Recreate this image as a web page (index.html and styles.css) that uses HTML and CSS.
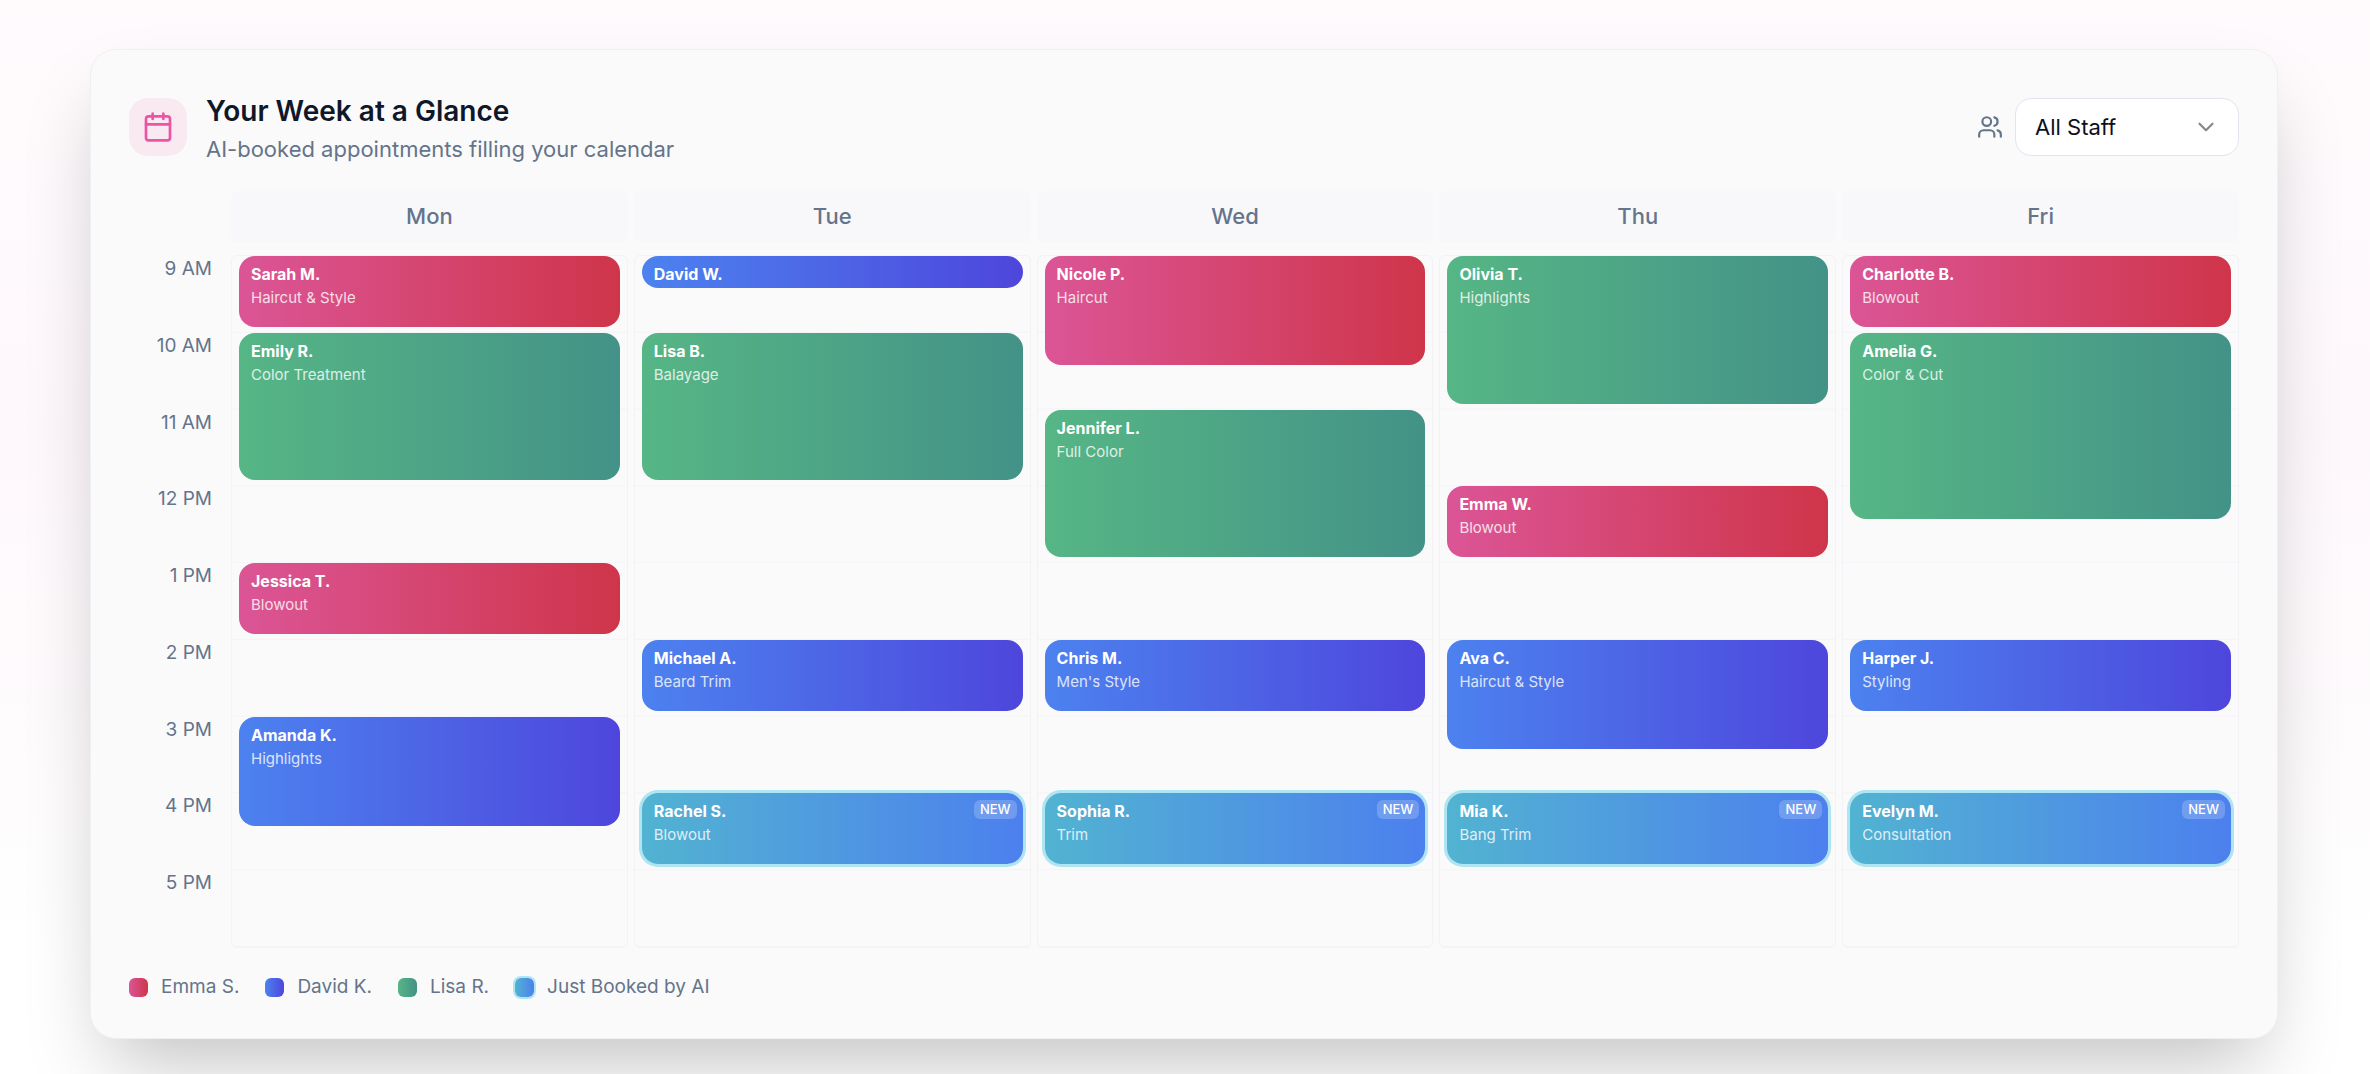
FILE: index.html
```html
<!DOCTYPE html>
<html lang="en">
<head>
    <meta charset="UTF-8">
    <meta name="viewport" content="width=device-width, initial-scale=1.0">
    <title>Your Week at a Glance</title>
    <link rel="stylesheet" href="styles.css">
</head>
<body>
    <main class="card">
        <header class="card-header">
            <div class="icon-box">
                <svg class="icon-calendar" viewBox="0 0 24 24" aria-hidden="true">
                    <path d="M8 2v4M16 2v4M3 10h18"/>
                    <rect x="3" y="4" width="18" height="18" rx="2"/>
                </svg>
            </div>
            <div class="heading">
                <h1>Your Week at a Glance</h1>
                <p>AI-booked appointments filling your calendar</p>
            </div>
            <div class="filter">
                <label for="staff" aria-label="Staff">
                    <svg class="icon-users" viewBox="0 0 24 24" aria-hidden="true">
                        <path d="M16 21v-2a4 4 0 0 0-4-4H6a4 4 0 0 0-4 4v2"/>
                        <circle cx="9" cy="7" r="4"/>
                        <path d="M22 21v-2a4 4 0 0 0-3-3.87M16 3.13a4 4 0 0 1 0 7.75"/>
                    </svg>
                </label>
                <div class="select-wrap">
                    <select id="staff">
                        <option>All Staff</option>
                        <option>Emma S.</option>
                        <option>David K.</option>
                        <option>Lisa R.</option>
                    </select>
                    <svg class="icon-chevron" viewBox="0 0 24 24" aria-hidden="true">
                        <path d="m6 9 6 6 6-6"/>
                    </svg>
                </div>
            </div>
        </header>

        <!-- --start and --len are counted in half hours from 9 AM -->
        <section class="calendar">
            <div></div>
            <h2>Mon</h2>
            <h2>Tue</h2>
            <h2>Wed</h2>
            <h2>Thu</h2>
            <h2>Fri</h2>

            <div class="times">
                <span>9 AM</span>
                <span>10 AM</span>
                <span>11 AM</span>
                <span>12 PM</span>
                <span>1 PM</span>
                <span>2 PM</span>
                <span>3 PM</span>
                <span>4 PM</span>
                <span>5 PM</span>
            </div>

            <div class="day">
                <article class="event emma" style="--start: 1; --len: 2"><h3>Sarah M.</h3><p>Haircut &amp; Style</p></article>
                <article class="event lisa" style="--start: 3; --len: 4"><h3>Emily R.</h3><p>Color Treatment</p></article>
                <article class="event emma" style="--start: 9; --len: 2"><h3>Jessica T.</h3><p>Blowout</p></article>
                <article class="event david" style="--start: 13; --len: 3"><h3>Amanda K.</h3><p>Highlights</p></article>
            </div>

            <div class="day">
                <article class="event david" style="--start: 1; --len: 1"><h3>David W.</h3></article>
                <article class="event lisa" style="--start: 3; --len: 4"><h3>Lisa B.</h3><p>Balayage</p></article>
                <article class="event david" style="--start: 11; --len: 2"><h3>Michael A.</h3><p>Beard Trim</p></article>
                <article class="event booked" style="--start: 15; --len: 2"><h3>Rachel S.</h3><p>Blowout</p><span class="badge">NEW</span></article>
            </div>

            <div class="day">
                <article class="event emma" style="--start: 1; --len: 3"><h3>Nicole P.</h3><p>Haircut</p></article>
                <article class="event lisa" style="--start: 5; --len: 4"><h3>Jennifer L.</h3><p>Full Color</p></article>
                <article class="event david" style="--start: 11; --len: 2"><h3>Chris M.</h3><p>Men's Style</p></article>
                <article class="event booked" style="--start: 15; --len: 2"><h3>Sophia R.</h3><p>Trim</p><span class="badge">NEW</span></article>
            </div>

            <div class="day">
                <article class="event lisa" style="--start: 1; --len: 4"><h3>Olivia T.</h3><p>Highlights</p></article>
                <article class="event emma" style="--start: 7; --len: 2"><h3>Emma W.</h3><p>Blowout</p></article>
                <article class="event david" style="--start: 11; --len: 3"><h3>Ava C.</h3><p>Haircut &amp; Style</p></article>
                <article class="event booked" style="--start: 15; --len: 2"><h3>Mia K.</h3><p>Bang Trim</p><span class="badge">NEW</span></article>
            </div>

            <div class="day">
                <article class="event emma" style="--start: 1; --len: 2"><h3>Charlotte B.</h3><p>Blowout</p></article>
                <article class="event lisa" style="--start: 3; --len: 5"><h3>Amelia G.</h3><p>Color &amp; Cut</p></article>
                <article class="event david" style="--start: 11; --len: 2"><h3>Harper J.</h3><p>Styling</p></article>
                <article class="event booked" style="--start: 15; --len: 2"><h3>Evelyn M.</h3><p>Consultation</p><span class="badge">NEW</span></article>
            </div>
        </section>

        <ul class="legend">
            <li><span class="swatch emma"></span>Emma S.</li>
            <li><span class="swatch david"></span>David K.</li>
            <li><span class="swatch lisa"></span>Lisa R.</li>
            <li><span class="swatch booked"></span>Just Booked by AI</li>
        </ul>
    </main>
</body>
</html>
```
FILE: styles.css
```css
* {
    box-sizing: border-box;
    margin: 0;
    padding: 0;
}
body {
    font-family: Inter, "Liberation Sans", sans-serif;
    color: #64748b;
    background: linear-gradient(#fffbfd, #fef8fc 40%, #fefbfd 65%, #ffffff 90%) no-repeat;
    min-height: 100vh;
    padding: 49px 92px 35px 90px;
    overflow: hidden;
}
svg {
    fill: none;
    stroke: currentColor;
    stroke-width: 2;
    stroke-linecap: round;
    stroke-linejoin: round;
    display: block;
}
.card {
    background: #fafafa;
    border: 1px solid #eef0f4;
    border-radius: 26px;
    padding: 38px;
    box-shadow: 0 40px 80px -19px rgba(0, 0, 0, 0.25);
}

/* header */
.card-header {
    display: flex;
    align-items: center;
    gap: 19px;
    margin-bottom: 26px;
}
.icon-box {
    width: 58px;
    height: 58px;
    border-radius: 19px;
    background: #f9e9f1;
    color: #ec55a5;
    display: flex;
    align-items: center;
    justify-content: center;
}
.icon-calendar {
    width: 32px;
    height: 32px;
}
.heading {
    flex: 1;
}
.heading h1 {
    font-size: 28px;
    line-height: 46px;
    font-weight: 600;
    color: #0f172a;
}
.heading p {
    font-size: 22px;
    line-height: 31px;
}
.filter {
    display: flex;
    align-items: center;
    gap: 12px;
}
.icon-users,
.icon-chevron {
    width: 26px;
    height: 26px;
}
.select-wrap {
    position: relative;
}
.select-wrap select {
    appearance: none;
    width: 224px;
    height: 58px;
    padding: 0 52px 0 19px;
    font-family: inherit;
    font-size: 22px;
    color: #0b1020;
    background: #ffffff;
    border: 1px solid #e2e4f0;
    border-radius: 16px;
}
.icon-chevron {
    position: absolute;
    right: 20px;
    top: 16px;
    color: #85888f;
    pointer-events: none;
}

/* calendar */
.calendar {
    display: grid;
    grid-template-columns: 96px repeat(5, 1fr);
    column-gap: 6px;
    row-gap: 13px;
}
.calendar h2 {
    font-size: 22px;
    line-height: 51px;
    font-weight: 500;
    text-align: center;
    background: #f8f8fb;
    border-radius: 6px;
}
.times,
.day {
    display: grid;
    height: 693px;
}
.times {
    grid-template-rows: repeat(9, 1fr);
    padding: 1px 13px 1px 0;
    text-align: right;
    font-size: 19px;
    line-height: 26px;
}
.day {
    grid-template-rows: repeat(18, 1fr);
    padding: 0 7px;
    border: 1px solid #f2f2f7;
    border-radius: 6px;
    background: linear-gradient(transparent calc(100% - 1px), #f4f4f9 0) 0 0 / 100% calc(100% / 9) #fafafa;
}
.event {
    position: relative;
    grid-row: var(--start) / span var(--len);
    min-height: 0;
    margin-bottom: 6px;
    padding: 7px 12px;
    border-radius: 16px;
    color: #ffffff;
    line-height: 23px;
}
.event h3 {
    font-size: 16px;
    font-weight: 700;
}
.event p {
    font-size: 15px;
    opacity: 0.8;
}
.emma {
    background: linear-gradient(to right, #db5596, #cf354a);
}
.david {
    background: linear-gradient(to right, #4c82ef, #4e46dc);
}
.lisa {
    background: linear-gradient(to right, #56b685, #439287);
}
.booked {
    background: linear-gradient(to right, #52b3d1, #4c80ee);
    box-shadow: 0 0 0 3px #aee5f2;
}
.badge {
    position: absolute;
    top: 7px;
    right: 6px;
    padding: 0 6px;
    border-radius: 6px;
    background: rgba(255, 255, 255, 0.2);
    font-size: 13px;
    line-height: 19px;
    font-weight: 500;
}

/* legend */
.legend {
    display: flex;
    flex-wrap: wrap;
    gap: 26px;
    margin-top: 26px;
    list-style: none;
    font-size: 19px;
    line-height: 26px;
}
.legend li {
    display: flex;
    align-items: center;
    gap: 13px;
}
.swatch {
    width: 19px;
    height: 19px;
    border-radius: 6px;
}
.swatch.booked {
    box-shadow: 0 0 0 2px #aee5f2;
}
```
